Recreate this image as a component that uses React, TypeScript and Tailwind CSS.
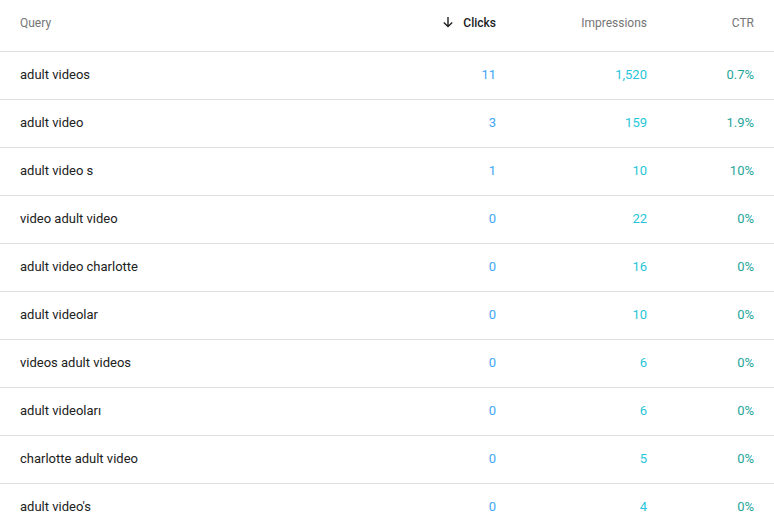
import React from "react";

const rows: [string, string, string, string][] = [
  ["adult videos", "11", "1,520", "0.7%"],
  ["adult video", "3", "159", "1.9%"],
  ["adult video s", "1", "10", "10%"],
  ["video adult video", "0", "22", "0%"],
  ["adult video charlotte", "0", "16", "0%"],
  ["adult videolar", "0", "10", "0%"],
  ["videos adult videos", "0", "6", "0%"],
  ["adult videoları", "0", "6", "0%"],
  ["charlotte adult video", "0", "5", "0%"],
  ["adult video's", "0", "4", "0%"],
];

export default function App() {
  return (
    <div
      className="w-[774px] h-[526px] overflow-hidden bg-white"
      style={{ fontFamily: "Roboto, 'Noto Sans', sans-serif" }}
    >
      <div className="flex items-start h-[52px] border-b border-[#e0e0e0] pl-5 pr-5 pt-[15px] text-[12px] leading-[16px] text-[#757575]">
        <div className="flex-1">Query</div>
        <div className="w-[150px] h-4 flex justify-end items-center gap-[9px] text-[#212121] font-medium">
          <svg width="12" height="12" viewBox="0 0 12 12" className="mb-[3px]">
            <path d="M6 1v9.5M1.8 6.5L6 10.6l4.2-4.1" stroke="#212121" strokeWidth="1.4" fill="none" />
          </svg>
          <span>Clicks</span>
        </div>
        <div className="w-[151px] text-right">Impressions</div>
        <div className="w-[107px] text-right">CTR</div>
      </div>
      {rows.map((r, i) => (
        <div
          key={i}
          className="flex h-[48px] items-center border-b border-[#e0e0e0] pl-5 pr-5 pb-[2px] text-[13px] leading-[16px]"
        >
          <div className="flex-1 text-[#212121]">{r[0]}</div>
          <div className="w-[150px] text-right text-[#42a5f5]">{r[1]}</div>
          <div className="w-[151px] text-right text-[#26c6da]">{r[2]}</div>
          <div className="w-[107px] text-right text-[#26a69a]">{r[3]}</div>
        </div>
      ))}
    </div>
  );
}
